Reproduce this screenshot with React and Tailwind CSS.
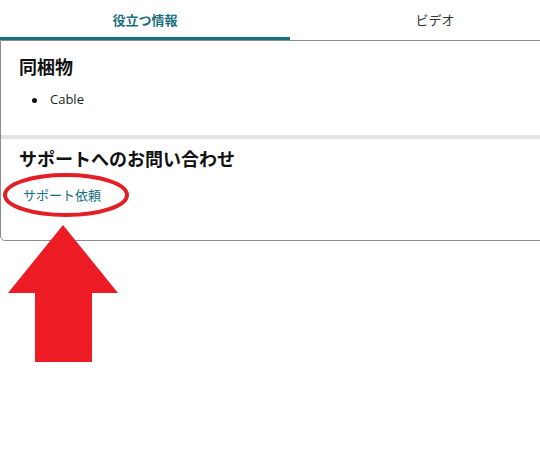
export default function App() {
  const font = { fontFamily: '"Noto Sans CJK JP", "Noto Sans", sans-serif' };
  return (
    <div className="relative w-[540px] h-[454px] overflow-hidden bg-white" style={font}>
      <div className="w-[580px]">
        <div className="flex h-10">
          <div className="w-[290px] flex items-center justify-center border-b-[3px] border-[#17707f] text-[13px] font-bold text-[#1b6f7e] pt-[3px]">
            役立つ情報
          </div>
          <div className="w-[290px] flex items-center justify-center text-[13px] text-[#333]">
            ビデオ
          </div>
        </div>
        <div className="border border-[#8c8c8c] rounded-b-[5px] h-[201px]">
          <div className="pt-[12px] pl-[18px]">
            <h2 className="text-[18px] leading-[26px] font-bold text-[#111]">同梱物</h2>
            <div className="mt-[11px] flex items-center h-5 pl-[13px]">
              <span className="w-[5px] h-[5px] rounded-full bg-[#111]"></span>
              <span className="ml-[13px] text-[13px] text-[#222]" style={{ fontFamily: '"Open Sans", sans-serif' }}>Cable</span>
            </div>
          </div>
          <div className="mt-[25px] h-[4px] bg-[#e1e6e5]"></div>
          <div className="pt-[6px] pl-[18px]">
            <h2 className="text-[18px] leading-[26px] font-bold text-[#111]">サポートへのお問い合わせ</h2>
            <div className="mt-[14px] pl-[4px] h-5 leading-5 text-[13px] text-[#17707f]">サポート依頼</div>
          </div>
        </div>
      </div>
      <svg className="absolute left-0 top-0 pointer-events-none" width="540" height="454">
        <ellipse cx="66" cy="195" rx="61" ry="20" fill="none" stroke="#e31e25" strokeWidth="4" />
        <polygon points="63,225 118,293 92,293 92,362 35,362 35,293 8,293" fill="#ed1c24" />
      </svg>
    </div>
  );
}
